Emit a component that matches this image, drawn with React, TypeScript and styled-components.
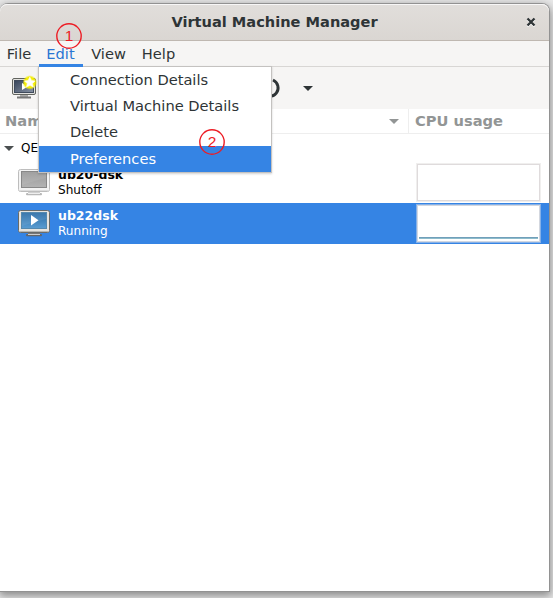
import React from "react";
import styled, { createGlobalStyle } from "styled-components";

const Global = createGlobalStyle`
  * { box-sizing: border-box; }
  body {
    margin: 0;
    background: #dedede;
    font-family: "DejaVu Sans", sans-serif;
    font-size: 14.64px;
    color: #2e3436;
    overflow: hidden;
  }
`;

const Desktop = styled.div`
  width: 553px;
  height: 598px;
  padding-top: 3px;
  overflow: hidden;
  background: #e8e8e8;
`;

const Window = styled.main`
  position: relative;
  width: 550px;
  height: 589px;
  display: flex;
  flex-direction: column;
  background: #fff;
  border: 1px solid #929292;
  border-left: 0;
  border-radius: 8px 8px 0 0;
  box-shadow: 0 3px 9px 1px rgba(0, 0, 0, 0.4);
`;

const TitleBar = styled.header`
  flex: 0 0 37px;
  display: flex;
  align-items: center;
  justify-content: center;
  position: relative;
  background: linear-gradient(#e1dedb, #dad6d2);
  border-bottom: 1px solid #bfb8b1;
  border-radius: 7px 7px 0 0;
  box-shadow: inset 0 1px #f8f7f7;
`;

const Title = styled.h1`
  margin: 0;
  font-size: 14.58px;
  line-height: 18px;
  white-space: nowrap;
`;

const CloseIcon = styled.svg`
  position: absolute;
  right: 13px;
  top: 13px;
`;

const MenuBar = styled.nav`
  flex: 0 0 26px;
  display: flex;
  background: #f6f5f4;
  border-bottom: 1px solid #d8d6d4;
`;

const MenuName = styled.div<{ $width: number; $active?: boolean }>`
  width: ${(p) => p.$width}px;
  height: 25px;
  line-height: 26px;
  text-align: center;
  white-space: nowrap;
  color: ${(p) => (p.$active ? "#2a76d2" : "#2e3436")};
`;

const ToolBar = styled.div`
  flex: 0 0 42px;
  display: flex;
  background: #f6f5f4;
`;

const NewMachineIcon = styled.svg`
  margin: 8px 0 0 11px;
`;

const PowerIcon = styled.svg`
  margin: 10px 0 0 221px;
`;

const ArrowIcon = styled.svg`
  margin: 19px 0 0 21px;
`;

const ListHeader = styled.div`
  flex: 0 0 25px;
  display: grid;
  grid-template-columns: 409px 1fr;
  border-bottom: 1px solid #eeeeee;
  color: #929595;
  font-weight: bold;
  font-size: 14.66px;
  line-height: 24px;
`;

const HeaderCell = styled.div<{ $divided?: boolean }>`
  display: flex;
  align-items: center;
  justify-content: space-between;
  padding: 0 9px 0 ${(p) => (p.$divided ? 5 : 6)}px;
  border-right: ${(p) => (p.$divided ? "1px solid #eeeeee" : "0")};
`;

const Connection = styled.div`
  flex: 0 0 28px;
  display: flex;
  align-items: center;
  gap: 7px;
  padding-left: 4px;
  color: #000;
  font-size: 12px;
`;

const MachineRow = styled.div<{ $selected?: boolean }>`
  flex: 0 0 41px;
  display: grid;
  grid-template-columns: 58px 358px 125px;
  color: ${(p) => (p.$selected ? "#fff" : "#000")};
  background: ${(p) => (p.$selected ? "#3584e4" : "#fff")};
`;

const MachineText = styled.div`
  padding-top: 5px;
  font-size: 12.1px;
  line-height: 15px;
`;

const MachineName = styled.div`
  margin-bottom: 1px;
  font-weight: bold;
  font-size: 12.5px;
`;

const ScreenIcon = styled.svg`
  margin: 5px 0 0 17px;
`;

const Graph = styled.div<{ $running?: boolean }>`
  height: 39px;
  margin-top: 1px;
  padding: 2px;
  border: 1px solid ${(p) => (p.$running ? "#86b1e8" : "#f0efee")};
  background: #fff;
  box-shadow: inset 0 0 0 1px ${(p) => (p.$running ? "#d3d7df" : "#dfdbdc")};
  display: flex;
  align-items: flex-end;
`;

const Usage = styled.div`
  width: 119px;
  height: 2px;
  margin: 0 0 1px;
  background: linear-gradient(#719fba 50%, #8dbccb 50%);
`;

const Popup = styled.div`
  position: absolute;
  left: 38px;
  top: 62px;
  width: 234px;
  height: 107px;
  border: 1px solid #c4c2c0;
  background: #fff;
  box-shadow: 0 1px 2px rgba(0, 0, 0, 0.18);
`;

const PopupItem = styled.div<{ $selected?: boolean }>`
  height: 26px;
  margin-top: ${(p) => (p.$selected ? 1 : 0)}px;
  padding-left: 31px;
  line-height: 26px;
  white-space: nowrap;
  color: ${(p) => (p.$selected ? "#fff" : "#2e3436")};
  background: ${(p) => (p.$selected ? "#3584e4" : "#fff")};
`;

const OpenMark = styled.div`
  position: absolute;
  left: 39px;
  top: 60px;
  width: 44px;
  height: 3px;
  background: #3584e4;
`;

const StepMark = styled.svg<{ $x: number; $y: number }>`
  position: absolute;
  left: ${(p) => p.$x}px;
  top: ${(p) => p.$y}px;
  font: 15.5px "Liberation Sans", sans-serif;
`;

function Step({ x, y, label }: { x: number; y: number; label: string }) {
  return (
    <StepMark $x={x} $y={y} width="26" height="26">
      <circle cx="13" cy="13" r="12.2" fill="none" stroke="#ed1c24" strokeWidth="1.4" />
      <text x="13" y="18.3" textAnchor="middle" fill="#ed1c24">{label}</text>
    </StepMark>
  );
}

function Triangle({ color = "currentColor" }: { color?: string }) {
  return <svg width="10" height="5"><path d="M0 0H10L5 5Z" fill={color} /></svg>;
}

function MachineIcon({ running = false }: { running?: boolean }) {
  const id = running ? "running" : "off";
  return (
    <ScreenIcon width="34" height="32" viewBox="0 0 34 32">
      <defs>
        <linearGradient id={id} x2="0" y2="1">
          <stop stopColor={running ? "#2a6ca5" : "#999"} />
          <stop offset="1" stopColor={running ? "#5a9dd2" : "#b3b3b3"} />
        </linearGradient>
      </defs>
      <path d="M11 24H23V27H11Z" fill={running ? "#777" : "#d0d0d0"} />
      <rect x="9" y="26" width="16" height="2.2" rx="1" fill={running ? "#666" : "#b8b8b8"} />
      <path d="M11 26.5H23" stroke={running ? "#ccc" : "#eee"} />
      <rect x="1.5" y="2.5" width="31" height="22" rx="2" fill={running ? "#e6e4df" : "#f3f3f3"} stroke={running ? "#696b69" : "#bdbdbd"} />
      <rect x="4.5" y="4.5" width="25" height="16" fill={`url(#${id})`} stroke={running ? "#5589ae" : "#888"} />
      <path d="M5 5H29V11Q16 14 5 18Z" fill="#fff" opacity="0.08" />
      {running && <path d="M14 7L21.5 12.3L14 17.6Z" fill="#fff" />}
      <path d="M2 23.5H32" stroke={running ? "#b5b5b2" : "#ddd"} />
    </ScreenIcon>
  );
}

export default function App() {
  return (
    <>
      <Global />
      <Desktop>
        <Window>
          <TitleBar>
            <Title>Virtual Machine Manager</Title>
            <CloseIcon width="10" height="10"><path d="M1.5 2.5L8.5 9.5M8.5 2.5L1.5 9.5" stroke="#fff" strokeWidth="2" /><path d="M1.5 1.5L8.5 8.5M8.5 1.5L1.5 8.5" stroke="#2e3436" strokeWidth="2.3" /></CloseIcon>
          </TitleBar>
          <MenuBar>
            <MenuName $width={38}>File</MenuName>
            <MenuName $width={45} $active>Edit</MenuName>
            <MenuName $width={51}>View</MenuName>
            <MenuName $width={49}>Help</MenuName>
          </MenuBar>
          <ToolBar>
            <NewMachineIcon width="26" height="25" viewBox="0 0 26 25">
              <defs>
                <linearGradient id="screen" x2="1" y2="1"><stop stopColor="#36445a" /><stop offset="1" stopColor="#8792a4" /></linearGradient>
                <radialGradient id="glow"><stop stopColor="#fff750" /><stop offset=".7" stopColor="#f4ee00" /><stop offset="1" stopColor="#f4ee00" stopOpacity="0" /></radialGradient>
              </defs>
              <path d="M9 20H17V23H9Z" fill="#aaa" /><path d="M6 22.5H20" stroke="#777" strokeWidth="2" />
              <rect x="1.5" y="3.5" width="23" height="16" rx="1.5" fill="#e2e2df" stroke="#62645f" />
              <rect x="3.5" y="5.5" width="19" height="12" fill="url(#screen)" stroke="#404b5c" />
              <path d="M11 8L17 11.5L11 15Z" fill="#fff" />
              <circle cx="18.8" cy="7.5" r="7.4" fill="url(#glow)" />
              <path d="M18.8 2L20.5 5.5L24.2 6L21.5 8.4L22.4 12.2L19 10.3L15.4 12.2L16.3 8.4L13.4 6L17.1 5.5Z" fill="#fff" stroke="#fffce0" strokeWidth=".6" />
            </NewMachineIcon>
            <PowerIcon width="23" height="22"><path d="M15 3A8.6 8.6 0 1 1 8 3" fill="none" stroke="#2e3436" strokeWidth="2.9" /></PowerIcon>
            <ArrowIcon width="11" height="6"><path d="M1 0H11L6 5Z" fill="#2e3436" /></ArrowIcon>
          </ToolBar>
          <ListHeader>
            <HeaderCell $divided><span>Name</span><Triangle /></HeaderCell>
            <HeaderCell><span>CPU usage</span></HeaderCell>
          </ListHeader>
          <Connection><Triangle color="#4b4f50" />QEMU/KVM</Connection>
          <MachineRow>
            <MachineIcon />
            <MachineText><MachineName>ub20-dsk</MachineName>Shutoff</MachineText>
            <Graph />
          </MachineRow>
          <MachineRow $selected>
            <MachineIcon running />
            <MachineText><MachineName>ub22dsk</MachineName>Running</MachineText>
            <Graph $running><Usage /></Graph>
          </MachineRow>
          <Popup>
            <PopupItem>Connection Details</PopupItem>
            <PopupItem>Virtual Machine Details</PopupItem>
            <PopupItem>Delete</PopupItem>
            <PopupItem $selected>Preferences</PopupItem>
          </Popup>
          <OpenMark />
          <Step x={55.5} y={18.5} label="1" />
          <Step x={198.5} y={124.5} label="2" />
        </Window>
      </Desktop>
    </>
  );
}
